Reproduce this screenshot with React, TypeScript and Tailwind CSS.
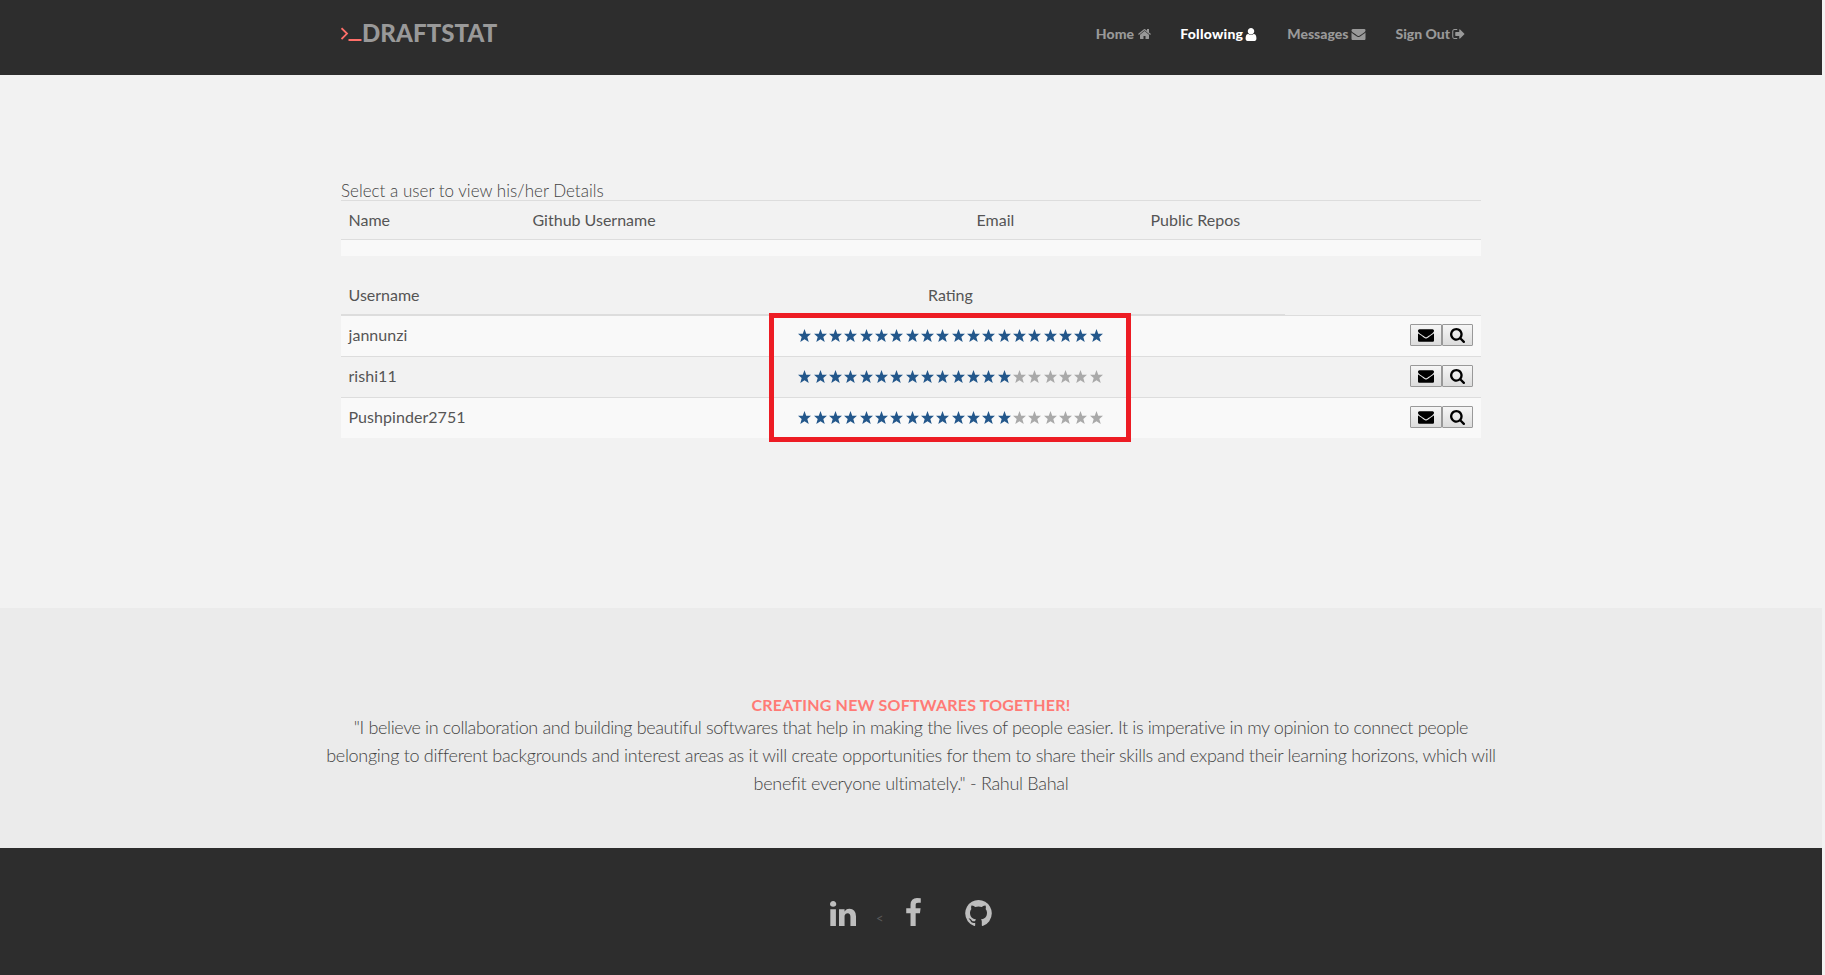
import type { ReactNode } from "react";

function Glyph({ box, d, className }: { box: string; d: string; className: string }) {
  return (
    <svg viewBox={box} className={className} fill="currentColor" aria-hidden="true">
      <path d={d} />
    </svg>
  );
}

const HOME =
  "M1472 992v480q0 26-19 45t-45 19h-384v-384h-256v384h-384q-26 0-45-19t-19-45v-480q0-1 .5-3t.5-3l575-474 575 474q1 2 1 6zm223-69l-62 74q-8 9-21 11h-3q-13 0-21-7l-692-577-692 577q-12 8-24 7-13-2-21-11l-62-74q-8-10-7-23.5t11-21.5l719-599q32-26 76-26t76 26l244 204v-195q0-14 9-23t23-9h192q14 0 23 9t9 23v408l219 182q10 8 11 21.5t-7 23.5z";
const USER =
  "M1536 1399q0 109-62.5 187t-150.5 78h-854q-88 0-150.5-78t-62.5-187q0-85 8.5-160.5t31.5-152 58.5-131 94-89 134.5-34.5q131 128 313 128t313-128q76 0 134.5 34.5t94 89 58.5 131 31.5 152 8.5 160.5zm-256-887q0 159-112.5 271.5t-271.5 112.5-271.5-112.5-112.5-271.5 112.5-271.5 271.5-112.5 271.5 112.5 112.5 271.5z";
const ENVELOPE =
  "M1792 710v794q0 66-47 113t-113 47h-1472q-66 0-113-47t-47-113v-794q44 49 101 87 362 246 497 345 57 42 92.5 65.5t94.5 48 110 24.5h2q51 0 110-24.5t94.5-48 92.5-65.5q170-123 498-345 57-39 100-87zm0-294q0 79-49 151t-122 123q-376 261-468 325-10 7-42.5 30.5t-54 38-52 32.5-57.5 27-50 9h-2q-23 0-50-9t-57.5-27-52-32.5-54-38-42.5-30.5q-91-64-262-182.5t-205-142.5q-62-42-117-115.5t-55-136.5q0-78 41.5-130t118.5-52h1472q65 0 112.5 47t47.5 113z";
const SIGN_OUT =
  "M704 1440q0 4 1 20t.5 26.5-3 23.5-10 19.5-20.5 6.5h-320q-119 0-203.5-84.5t-84.5-203.5v-704q0-119 84.5-203.5t203.5-84.5h320q13 0 22.5 9.5t9.5 22.5q0 4 1 20t.5 26.5-3 23.5-10 19.5-20.5 6.5h-320q-66 0-113 47t-47 113v704q0 66 47 113t113 47h312l11.5 1 11.5 3 8 5.5 7 9 2 13.5zm928-544q0 26-19 45l-544 544q-19 19-45 19t-45-19-19-45v-288h-448q-26 0-45-19t-19-45v-384q0-26 19-45t45-19h448v-288q0-26 19-45t45-19 45 19l544 544q19 19 19 45z";
const SEARCH =
  "M1216 832q0-185-131.5-316.5t-316.5-131.5-316.5 131.5-131.5 316.5 131.5 316.5 316.5 131.5 316.5-131.5 131.5-316.5zm512 832q0 52-38 90t-90 38q-54 0-90-38l-343-342q-179 124-399 124-143 0-273.5-55.5t-225-150-150-225-55.5-273.5 55.5-273.5 150-225 225-150 273.5-55.5 273.5 55.5 225 150 150 225 55.5 273.5q0 220-124 399l343 343q37 37 37 90z";
const LINKEDIN =
  "M477 625v991h-330v-991h330zm21-306q1 73-50.5 122t-135.5 49h-2q-82 0-132-49t-50-122q0-74 51.5-122.5t134.5-48.5 133 48.5 51 122.5zm1166 729v568h-329v-530q0-105-40.5-164.5t-126.5-59.5q-63 0-105.5 34.5t-63.5 85.5q-11 30-11 81v553h-329q2-399 2-647t-1-296l-1-48h329v144h-2q20-32 41-56t56.5-52 87-43.5 114.5-15.5q171 0 275 113.5t104 332.5z";
const FACEBOOK =
  "M1343 12v264h-157q-86 0-116 36t-30 108v189h293l-39 296h-254v759h-306v-759h-255v-296h255v-218q0-186 104-288.5t277-102.5q147 0 228 12z";
const GITHUB =
  "M896 128q209 0 385.5 103t279.5 279.5 103 385.5q0 251-146.5 451.5t-378.5 277.5q-27 5-40-7t-13-30q0-3 .5-76.5t.5-134.5q0-97-52-142 57-6 102.5-18t94-39 81-66.5 53-105 20.5-150.5q0-119-79-206 37-91-8-204-28-9-81 11t-92 44l-38 24q-93-26-192-26t-192 26q-16-11-42.5-27t-83.5-38.5-85-13.5q-45 113-8 204-79 87-79 206 0 85 20.5 150t52.5 105 80.5 67 94 39 102.5 18q-39 36-49 103-21 10-45 15t-57 5-65.5-21.5-55.5-62.5q-19-32-48.5-52t-49.5-24l-20-3q-21 0-29 4.5t-5 11.5 9 14 13 12l7 5q22 10 43.5 38t31.5 51l10 23q13 38 44 61.5t67 30 69.5 7 55.5-3.5l23-4q0 38 .5 88.5t.5 54.5q0 18-13 30t-40 7q-232-77-378.5-277.5t-146.5-451.5q0-209 103-385.5t279.5-279.5 385.5-103z";
const STAR = "M6 0 7.6 4.3H12L8.6 7.4 9.9 12 6 9.5 2.1 12 3.4 7.4 0 4.3H4.4Z";

const users = [
  { name: "jannunzi", rating: 20 },
  { name: "rishi11", rating: 14 },
  { name: "Pushpinder2751", rating: 14 },
];

function NavLink({ label, active, className, children }: { label: string; active?: boolean; className: string; children: ReactNode }) {
  return (
    <a href="#" className={`flex items-center whitespace-nowrap ${active ? "text-white" : "text-[#999]"} ${className}`}>
      <span>{label}</span>
      {children}
    </a>
  );
}

function Rating({ value }: { value: number }) {
  return (
    <div className="flex">
      {Array.from({ length: 20 }, (_, i) => (
        <span key={i} className={`flex w-[15.35px] justify-center ${i < value ? "text-[#23578b]" : "text-[#a9a9a9]"}`}>
          <Glyph box="0 0 12 12" d={STAR} className="size-[13px]" />
        </span>
      ))}
    </div>
  );
}

function ActionButton({ label, className, children }: { label: string; className: string; children: ReactNode }) {
  return (
    <button
      aria-label={label}
      className={`flex h-[22px] items-center justify-center rounded-[1px] border border-[#999] bg-linear-to-b from-[#f6f6f6] to-[#dcdcdc] text-black ${className}`}
    >
      {children}
    </button>
  );
}

export default function App() {
  return (
    <div className="h-[975px] overflow-hidden bg-[#f2f2f2] font-['Lato',sans-serif] text-[#555]">
      <div className="flex h-full w-[1822px] flex-col">
        <header className="h-[75px] bg-[#2d2d2d]">
          <div className="mx-auto flex w-[1140px] items-start justify-between">
            <a href="#" className="mt-[17px] flex text-[24px] leading-8 font-black text-[#999]">
              <svg viewBox="0 0 21 24" className="mt-1 h-6 w-[21px]" fill="none" stroke="#ff6f69" strokeWidth="1.8" aria-hidden="true">
                <path d="M.5 7.2 6 12.6.5 18M7.5 19H20.5" />
              </svg>
              <span className="tracking-[0.1px]">DRAFTSTAT</span>
            </a>
            <nav className="mt-6 mr-4 flex text-[14px] leading-5 font-black">
              <NavLink label="Home" className="mr-[29px] gap-1 tracking-[0.1px]">
                <Glyph box="64 0 1664 1792" d={HOME} className="h-[14px] w-[13px]" />
              </NavLink>
              <NavLink label="Following" active className="mr-[30px] gap-[2px] tracking-[0.25px]">
                <Glyph box="256 128 1280 1536" d={USER} className="h-[13px] w-[12px]" />
              </NavLink>
              <NavLink label="Messages" className="mr-[29px] gap-[3px]">
                <Glyph box="0 128 1792 1664" d={ENVELOPE} className="h-[13px] w-[15px]" />
              </NavLink>
              <NavLink label="Sign Out" className="gap-[2px]">
                <Glyph box="64 0 1600 1792" d={SIGN_OUT} className="h-[14px] w-[13px]" />
              </NavLink>
            </nav>
          </div>
        </header>

        <main className="h-[533px]">
          <div className="mx-auto w-[1140px] pt-[106px]">
            <p className="h-[19px] text-[17px] leading-5 font-light tracking-[0.02px] whitespace-nowrap text-[#444]">
              Select a user to view his/her Details
            </p>
            <div className="flex h-[39px] items-center border-t border-[#ddd] pl-[7.5px] text-[16px]">
              <span className="w-[184px]">Name</span>
              <span className="w-[444px]">Github Username</span>
              <span className="w-[174px]">Email</span>
              <span>Public Repos</span>
            </div>
            <div className="h-[17px] border-t border-[#ddd] bg-[#f9f9f9]" />

            <div className="mt-5 flex h-[38px] items-center pl-[7.5px] text-[16px]">
              <span className="w-[579.5px]">Username</span>
              <span>Rating</span>
            </div>
            <div className="relative">
              <div className="h-px w-[944px] bg-[#ddd]" />
              {users.map((user, i) => (
                <div
                  key={user.name}
                  className={`flex h-[41px] items-center border-t border-[#ddd] pr-2 pb-[2px] pl-[7.5px] text-[16px] ${i % 2 ? "" : "bg-[#f9f9f9]"}`}
                >
                  <span className="w-[448.5px] tracking-[0.05px]">{user.name}</span>
                  <Rating value={user.rating} />
                  <div className="ml-auto flex">
                    <ActionButton label="Message" className="w-8">
                      <Glyph box="0 0 1792 1792" d={ENVELOPE} className="size-4" />
                    </ActionButton>
                    <ActionButton label="View" className="w-[31px]">
                      <Glyph box="64 128 1664 1664" d={SEARCH} className="size-[15px]" />
                    </ActionButton>
                  </div>
                </div>
              ))}
              <div className="absolute top-[-1px] left-[428px] h-[129px] w-[362px] border-5 border-[#ed1c24]" />
            </div>
          </div>
        </main>

        <section className="h-[240px] bg-[#ebebeb] pt-[87px] text-center">
          <h2 className="h-[18px] text-[16px] leading-5 font-bold tracking-[0.2px] text-[#ff7a75]">CREATING NEW SOFTWARES TOGETHER!</h2>
          <p className="text-[18px] leading-7 font-light tracking-[-0.29px] whitespace-nowrap text-[#444]">
            <span className="tracking-[-0.37px]">
              "I believe in collaboration and building beautiful softwares that help in making the lives of people easier. It is imperative in my opinion to connect people
            </span>
            <br />
            belonging to different backgrounds and interest areas as it will create opportunities for them to share their skills and expand their learning horizons, which will
            <br />
            benefit everyone ultimately." - Rahul Bahal
          </p>
        </section>

        <footer className="flex h-[127px] items-start bg-[#2d2d2d] pt-[50px] pl-[830px] text-[#bebebe]">
          <Glyph box="128 148 1536 1468" d={LINKEDIN} className="mt-[3px] h-[25px] w-[26px]" />
          <span className="mt-[10px] ml-[20px] w-[30px] text-[13px] leading-5 text-[#5a5a5a]">&lt;</span>
          <Glyph box="479 0 864 1664" d={FACEBOOK} className="h-[28px] w-[15px]" />
          <Glyph box="128 128 1536 1500" d={GITHUB} className="mt-[2px] ml-[44px] h-[26px] w-[27px]" />
        </footer>
      </div>
    </div>
  );
}
